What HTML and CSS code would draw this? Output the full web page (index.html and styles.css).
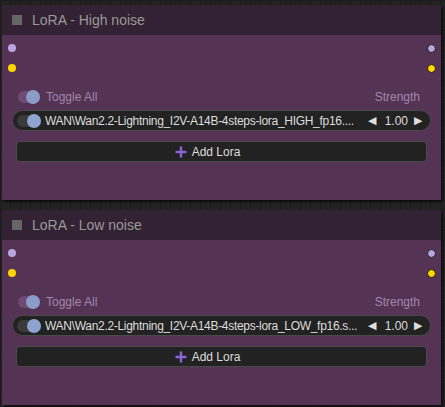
FILE: index.html
```html
<!DOCTYPE html>
<html lang="en">
<head>
    <meta charset="UTF-8">
    <title>LoRA nodes</title>
    <link rel="stylesheet" href="styles.css">
</head>
<body>
<div class="canvas">

    <div class="node">
        <div class="node-title">
            <span class="collapse"></span>
            <span class="title-text">LoRA - High noise</span>
        </div>
        <div class="node-body">
            <div class="slot"><i class="dot in purple"></i><i class="dot out purple"></i></div>
            <div class="slot"><i class="dot in yellow"></i><i class="dot out yellow"></i></div>

            <div class="toggle-row">
                <span class="switch muted"><i></i></span>
                <span class="toggle-label">Toggle All</span>
                <span class="strength-label">Strength</span>
            </div>

            <div class="lora-row">
                <span class="switch"><i></i></span>
                <span class="lora-name">WAN\Wan2.2-Lightning_I2V-A14B-4steps-lora_HIGH_fp16....</span>
                <span class="arrow">&#9664;</span>
                <span class="value">1.00</span>
                <span class="arrow">&#9654;</span>
            </div>

            <div class="add-btn">
                <svg class="plus" width="12" height="12" viewBox="0 0 12 12"><path d="M6 0.5V11.5M0.5 6H11.5" stroke="#8a63d6" stroke-width="2.4"/></svg>
                <span>Add Lora</span>
            </div>
        </div>
    </div>

    <div class="node">
        <div class="node-title">
            <span class="collapse"></span>
            <span class="title-text">LoRA - Low noise</span>
        </div>
        <div class="node-body">
            <div class="slot"><i class="dot in purple"></i><i class="dot out purple"></i></div>
            <div class="slot"><i class="dot in yellow"></i><i class="dot out yellow"></i></div>

            <div class="toggle-row">
                <span class="switch muted"><i></i></span>
                <span class="toggle-label">Toggle All</span>
                <span class="strength-label">Strength</span>
            </div>

            <div class="lora-row">
                <span class="switch"><i></i></span>
                <span class="lora-name">WAN\Wan2.2-Lightning_I2V-A14B-4steps-lora_LOW_fp16.s...</span>
                <span class="arrow">&#9664;</span>
                <span class="value">1.00</span>
                <span class="arrow">&#9654;</span>
            </div>

            <div class="add-btn">
                <svg class="plus" width="12" height="12" viewBox="0 0 12 12"><path d="M6 0.5V11.5M0.5 6H11.5" stroke="#8a63d6" stroke-width="2.4"/></svg>
                <span>Add Lora</span>
            </div>
        </div>
    </div>

</div>
</body>
</html>
```

FILE: styles.css
```css
*{
    margin: 0;
    padding: 0;
    box-sizing: border-box;
}
html, body{
    width: 445px;
    height: 407px;
    overflow: hidden;
}
body{
    font-family: "Liberation Sans", Arial, sans-serif;
    background-color: #222;
    background-image:
        linear-gradient(#1c1c1c 1px, transparent 1px),
        linear-gradient(90deg, #1c1c1c 1px, transparent 1px);
    background-size: 10px 10px;
}
.canvas{
    display: flex;
    flex-direction: column;
    gap: 10px;
    padding: 5px 0 0 2px;
}

/* node */
.node{
    width: 439px;
    box-shadow: 2px 2px 2px rgba(0, 0, 0, 0.6);
}
.node-title{
    height: 30px;
    background: #332233;
    display: flex;
    align-items: center;
    padding-left: 10px;
    border-radius: 2px 2px 0 0;
}
.collapse{
    width: 10px;
    height: 10px;
    background: #666;
    margin-right: 10px;
}
.title-text{
    color: #999;
    font-size: 14px;
}
.node-body{
    background: #553355;
    height: 165px;
    padding-top: 3px;
}

/* slots */
.slot{
    height: 20px;
    display: flex;
    align-items: center;
    justify-content: space-between;
    padding: 0 5px 0 6px;
}
.dot{
    display: block;
    width: 9px;
    height: 9px;
    border-radius: 50%;
}
.dot.in{
    width: 8px;
    height: 8px;
}
.dot.out{
    border: 1px solid #1a1a1a;
}
.purple{
    background: #b8a6e0;
}
.yellow{
    background: #ffd500;
}

/* toggle all */
.toggle-row{
    display: flex;
    align-items: center;
    height: 16px;
    margin-top: 11px;
    padding: 0 21px 0 16px;
    font-size: 12px;
}
.switch{
    position: relative;
    flex: none;
    width: 22px;
    height: 12px;
    border-radius: 6px;
    background: #3a3a3a;
}
.switch i{
    position: absolute;
    right: 0;
    top: -1px;
    width: 14px;
    height: 14px;
    border-radius: 50%;
    background: #8ea3cf;
}
.switch.muted{
    background: #6e4b72;
}
.switch.muted i{
    background: #8b9cc8;
}
.toggle-label{
    color: #a287ad;
    margin-left: 6px;
}
.strength-label{
    color: #a287ad;
    margin-left: auto;
}

/* lora row */
.lora-row{
    display: flex;
    align-items: center;
    height: 21px;
    margin: 5px 10px 0 10px;
    padding: 0 8px 0 4px;
    background: #222;
    border: 1px solid #4a4a4a;
    border-radius: 11px;
    font-size: 12px;
    color: #ddd;
    white-space: nowrap;
}
.lora-row .switch{
    width: 24px;
}
.lora-name{
    margin-left: 4px;
    letter-spacing: -0.3px;
    flex: 1;
    overflow: hidden;
}
.arrow{
    flex: none;
    font-size: 11px;
    color: #ddd;
}
.value{
    flex: none;
    margin: 0 6px 0 9px;
}

/* add lora */
.add-btn{
    height: 21px;
    margin: 10px 14px 0 14px;
    padding-right: 28px;
    background: #222;
    border: 1px solid #4a4a4a;
    border-radius: 4px;
    display: flex;
    align-items: center;
    justify-content: center;
    color: #ddd;
    font-size: 12px;
}
.plus{
    margin-right: 5px;
}
```
